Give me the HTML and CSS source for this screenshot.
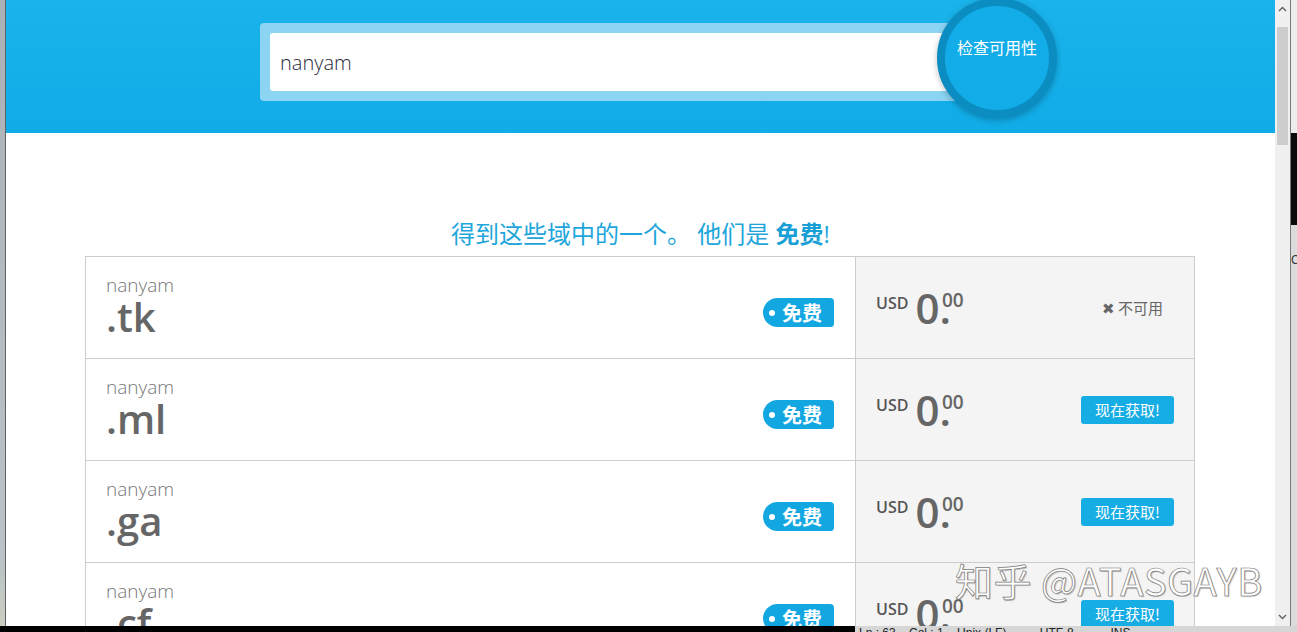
FILE: index.html
```html
<!DOCTYPE html>
<html lang="zh">

<head>
    <meta charset="UTF-8">
    <title>Freenom - 域名检查</title>
    <link rel="stylesheet" href="styles.css">
</head>

<body>
    <div class="screen">
        <div class="desk-left"></div>

        <div class="page">
            <div class="hero">
                <form class="search">
                    <div class="search-box">
                        <input class="search-input" type="text" value="nanyam">
                    </div>
                    <div class="check-btn">检查可用性</div>
                </form>
            </div>

            <h2 class="offer">得到这些域中的一个。 他们是 <b>免费</b>!</h2>

            <div class="domains">
                <div class="row">
                    <div class="name-cell">
                        <div class="name">
                            <div class="sld">nanyam</div>
                            <div class="tld">.tk</div>
                        </div>
                        <span class="free-tag">免费</span>
                    </div>
                    <div class="price-cell">
                        <div class="price">
                            <span class="cur">USD</span>
                            <span class="amt">0.</span>
                            <span class="cents">00</span>
                        </div>
                        <span class="unavail">✖ 不可用</span>
                    </div>
                </div>

                <div class="row">
                    <div class="name-cell">
                        <div class="name">
                            <div class="sld">nanyam</div>
                            <div class="tld">.ml</div>
                        </div>
                        <span class="free-tag">免费</span>
                    </div>
                    <div class="price-cell">
                        <div class="price">
                            <span class="cur">USD</span>
                            <span class="amt">0.</span>
                            <span class="cents">00</span>
                        </div>
                        <button class="get-btn">现在获取!</button>
                    </div>
                </div>

                <div class="row">
                    <div class="name-cell">
                        <div class="name">
                            <div class="sld">nanyam</div>
                            <div class="tld">.ga</div>
                        </div>
                        <span class="free-tag">免费</span>
                    </div>
                    <div class="price-cell">
                        <div class="price">
                            <span class="cur">USD</span>
                            <span class="amt">0.</span>
                            <span class="cents">00</span>
                        </div>
                        <button class="get-btn">现在获取!</button>
                    </div>
                </div>

                <div class="row">
                    <div class="name-cell">
                        <div class="name">
                            <div class="sld">nanyam</div>
                            <div class="tld">.cf</div>
                        </div>
                        <span class="free-tag">免费</span>
                    </div>
                    <div class="price-cell">
                        <div class="price">
                            <span class="cur">USD</span>
                            <span class="amt">0.</span>
                            <span class="cents">00</span>
                        </div>
                        <button class="get-btn">现在获取!</button>
                    </div>
                </div>
            </div>

            <div class="watermark">知乎 @ATASGAYB</div>
        </div>

        <div class="scrollbar">
            <div class="arrow">
                <svg width="9" height="6" viewBox="0 0 9 6"><polyline points="1,5 4.5,1.5 8,5" fill="none" stroke="#606060" stroke-width="1.4"/></svg>
            </div>
            <div class="thumb"></div>
            <div class="track"></div>
            <div class="arrow">
                <svg width="9" height="6" viewBox="0 0 9 6"><polyline points="1,1 4.5,4.5 8,1" fill="none" stroke="#606060" stroke-width="1.4"/></svg>
            </div>
        </div>

        <div class="desk-right">
            <div class="dr-top"></div>
            <div class="dr-dark"></div>
            <div class="dr-rest">C</div>
        </div>
    </div>

    <div class="taskbar">
        <div class="task-icons"></div>
        <div class="status">Ln : 63&nbsp;&nbsp;&nbsp;&nbsp;Col : 1&nbsp;&nbsp;&nbsp;&nbsp;Unix (LF)&nbsp;&nbsp;&nbsp;&nbsp;&nbsp;&nbsp;&nbsp;&nbsp;&nbsp;&nbsp;UTF-8&nbsp;&nbsp;&nbsp;&nbsp;&nbsp;&nbsp;&nbsp;&nbsp;&nbsp;&nbsp;&nbsp;INS</div>
    </div>
</body>

</html>
```

FILE: styles.css
```css
body {
    margin: 0;
    padding: 0;
    background-color: #000;
    font-family: 'Open Sans', 'Noto Sans CJK SC', sans-serif;
    overflow: hidden;
}

.screen {
    display: flex;
    height: 626px;
}

.desk-left {
    width: 6px;
    background: linear-gradient(#aab1b6, #bcc2c5 90%, #c9cfc0);
    border-right: 1px solid #5d6266;
    box-sizing: border-box;
}

.page {
    width: 1269px;
    position: relative;
    overflow: hidden;
    background-color: #fff;
}

.hero {
    height: 133px;
    display: flex;
    justify-content: center;
    align-items: flex-start;
    padding-left: 36px;
    box-sizing: border-box;
    background: linear-gradient(#1ab3eb, #10ace8);
}

.search {
    display: flex;
    align-items: flex-start;
    margin: 0;
}

.search-box {
    margin-top: 23px;
    width: 700px;
    height: 78px;
    padding: 10px;
    box-sizing: border-box;
    background-color: #8bd5f2;
    border-radius: 4px;
}

.search-input {
    width: 100%;
    height: 58px;
    border: 0;
    border-radius: 3px;
    padding: 0 10px;
    box-sizing: border-box;
    font-family: 'Open Sans', sans-serif;
    font-size: 20px;
    font-weight: 300;
    color: #2a2a3a;
    outline: none;
}

.check-btn {
    width: 120px;
    height: 120px;
    margin: -2px 0 0 -23px;
    padding-top: 30px;
    box-sizing: border-box;
    border-radius: 50%;
    border: 8px solid #0c8dc2;
    background-color: #12ade9;
    box-shadow: 0 2px 6px rgba(0, 0, 0, 0.25);
    color: #fff;
    font-family: 'Noto Sans CJK SC', sans-serif;
    font-size: 16px;
    line-height: 22px;
    text-align: center;
}

.offer {
    margin: 86px 0 0;
    text-align: center;
    font-family: 'Open Sans', 'Noto Sans CJK SC', sans-serif;
    font-size: 24px;
    font-weight: 400;
    line-height: 30px;
    color: #1ea6db;
}

.offer b {
    color: #199fd6;
}

.domains {
    width: 1110px;
    box-sizing: border-box;
    margin: 7px 0 0 79px;
    border: 1px solid #ccc;
    border-bottom: 0;
}

.row {
    display: flex;
    height: 102px;
    border-bottom: 1px solid #ccc;
    box-sizing: border-box;
}

.name-cell {
    flex: 1;
    display: flex;
    align-items: flex-start;
    padding: 16px 21px 0 20px;
}

.sld {
    font-size: 19px;
    font-weight: 300;
    line-height: 24px;
    color: #777;
}

.tld {
    font-size: 40px;
    font-weight: 600;
    line-height: 40px;
    color: #666;
}

.free-tag {
    margin: 25px 0 0 auto;
    height: 29px;
    width: 71px;
    box-sizing: border-box;
    display: flex;
    align-items: center;
    padding-left: 6px;
    border-radius: 15px 4px 4px 15px;
    background-color: #13a7e2;
    color: #fff;
    font-family: 'Noto Sans CJK SC', sans-serif;
    font-size: 20px;
    font-weight: 700;
}

.free-tag::before {
    content: '';
    width: 6px;
    height: 6px;
    margin-right: 7px;
    border-radius: 50%;
    background-color: #fff;
}

.price-cell {
    width: 339px;
    flex-shrink: 0;
    box-sizing: border-box;
    border-left: 1px solid #ccc;
    background-color: #f4f4f4;
    display: flex;
    align-items: center;
    justify-content: space-between;
    padding: 0 20px 0 20px;
}

.price {
    display: flex;
    align-items: flex-start;
    color: #666;
}

.cur {
    margin-top: 6px;
    font-size: 16px;
    font-weight: 600;
    line-height: 20px;
    color: #555;
}

.amt {
    margin-left: 7px;
    font-size: 42px;
    font-weight: 600;
    line-height: 42px;
}

.cents {
    margin: 3px 0 0 -9px;
    font-size: 19px;
    font-weight: 600;
    line-height: 20px;
}

.unavail {
    margin-right: 11px;
    font-family: 'Noto Sans CJK SC', sans-serif;
    font-size: 15px;
    color: #666;
}

.get-btn {
    width: 93px;
    height: 28px;
    padding: 0;
    border: 0;
    border-radius: 3px;
    background-color: #16ace4;
    color: #fff;
    font-family: 'Noto Sans CJK SC', sans-serif;
    font-size: 15px;
    cursor: pointer;
}

.watermark {
    position: absolute;
    left: 949px;
    top: 561px;
    font-family: 'Noto Sans CJK SC', sans-serif;
    font-size: 38px;
    line-height: 38px;
    letter-spacing: 0.5px;
    color: #fff;
    -webkit-text-stroke: 0.7px #7a7a7a;
    text-shadow: 1px 1px 1px rgba(0, 0, 0, 0.25);
    white-space: nowrap;
}

.scrollbar {
    width: 15px;
    display: flex;
    flex-direction: column;
    background-color: #f0f0f0;
}

.arrow {
    height: 18px;
    display: flex;
    align-items: center;
    justify-content: center;
}

.thumb {
    margin: 9px 2px 0;
    height: 118px;
    background-color: #cdcdcd;
}

.track {
    flex: 1;
}

.desk-right {
    width: 7px;
    display: flex;
    flex-direction: column;
    border-left: 1px solid #777;
    box-sizing: border-box;
}

.dr-top {
    height: 133px;
    background-color: #ececec;
}

.dr-dark {
    height: 92px;
    background-color: #0a0a0a;
}

.dr-rest {
    flex: 1;
    background-color: #dcdcdc;
    font-family: 'Liberation Sans', sans-serif;
    font-size: 12px;
    padding-top: 28px;
    color: #333;
}

.taskbar {
    display: flex;
    height: 6px;
    overflow: hidden;
}

.task-icons {
    width: 855px;
    background-color: #000;
}

.status {
    flex: 1;
    background-color: #d6d6d6;
    font-family: 'Liberation Sans', sans-serif;
    font-size: 12px;
    line-height: 14px;
    color: #222;
    white-space: nowrap;
    padding-left: 4px;
}
```
